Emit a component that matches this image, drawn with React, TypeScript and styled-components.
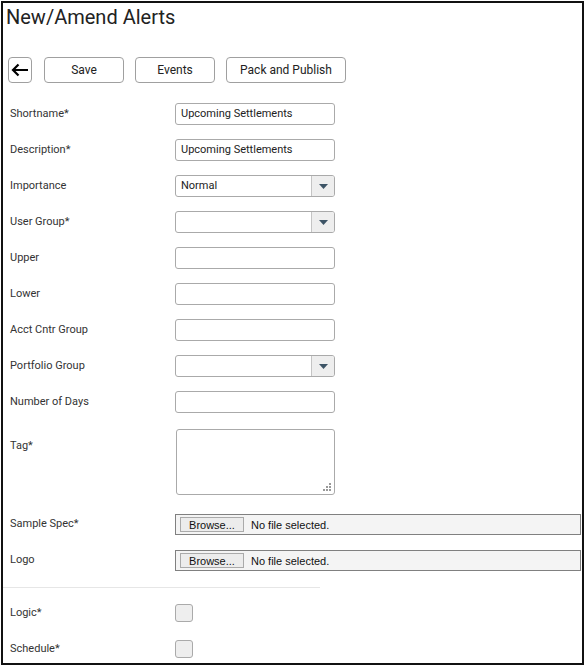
import React from "react";
import styled, {createGlobalStyle} from "styled-components";

const GlobalStyle = createGlobalStyle`
  html, body {
    margin: 0;
    padding: 0;
    background: #fff;
  }
  body {
    font-family: Roboto, "Liberation Sans", Arial, sans-serif;
    color: #333;
  }
`;

const Frame = styled.div`
  box-sizing: border-box;
  margin: 1px 0 0 1px;
  width: 583px;
  height: 664px;
  border: 2px solid #111;
  overflow: hidden;
`;

const Title = styled.h1`
  margin: 0;
  padding: 2px 0 0 3px;
  font-size: 20px;
  line-height: 24px;
  font-weight: 400;
  color: #222;
`;

const Toolbar = styled.div`
  display: flex;
  gap: 11px;
  margin: 28px 0 0 5px;
`;

const Button = styled.button<{ $w: number }>`
  box-sizing: border-box;
  width: ${p => p.$w}px;
  height: 26px;
  padding: 0;
  border: 1px solid #a0a0a0;
  border-radius: 4px;
  background: #fff;
  font-family: Roboto, "Liberation Sans", Arial, sans-serif;
  font-size: 12px;
  color: #222;
  display: flex;
  align-items: center;
  justify-content: center;
`;

const BackButton = styled(Button)`
  margin-right: 1px;
`;

const Form = styled.div`
  margin-top: 20px;
  padding-left: 7px;
`;

const Row = styled.div<{ $gap: number; $top?: boolean }>`
  display: grid;
  grid-template-columns: 165px 1fr;
  align-items: ${p => (p.$top ? "start" : "center")};
  margin-bottom: ${p => p.$gap}px;
`;

const Label = styled.div<{ $pad?: number }>`
  font-size: 11px;
  color: #333;
  padding-top: ${p => p.$pad ?? 0}px;
  margin-top: -2px;
`;

const TextInput = styled.div`
  box-sizing: border-box;
  width: 160px;
  height: 22px;
  border: 1px solid #aaa;
  border-radius: 3px;
  background: #fff;
  padding: 0 5px;
  font-size: 11px;
  line-height: 20px;
  color: #222;
`;

const SelectBox = styled.div`
  box-sizing: border-box;
  width: 160px;
  height: 22px;
  border: 1px solid #aaa;
  border-radius: 3px;
  background: #fff;
  display: flex;
  overflow: hidden;
`;

const SelectValue = styled.div`
  flex: 1;
  padding: 0 5px;
  font-size: 11px;
  line-height: 20px;
  color: #222;
`;

const SelectArrow = styled.div`
  width: 22px;
  background: #eee;
  border-left: 1px solid #c4c4c4;
  display: flex;
  align-items: center;
  justify-content: center;
`;

const AreaWrap = styled.div`
  position: relative;
  box-sizing: border-box;
  width: 159px;
  height: 66px;
  margin-left: 1px;
  border: 1px solid #aaa;
  border-radius: 3px;
  background: #fff;
`;

const Grip = styled.svg`
  position: absolute;
  right: 3px;
  bottom: 3px;
`;

const FileBox = styled.div`
  box-sizing: border-box;
  width: 406px;
  height: 21px;
  border: 1px solid #808080;
  background: #f4f4f4;
  display: flex;
  align-items: center;
  padding-left: 4px;
  gap: 7px;
  font-family: "Liberation Sans", Arial, sans-serif;
  font-size: 11px;
  color: #111;
`;

const BrowseButton = styled.div`
  box-sizing: border-box;
  width: 64px;
  height: 15px;
  border: 1px solid #aaa;
  background: #ececec;
  display: flex;
  align-items: center;
  justify-content: center;
  color: #111;
`;

const Separator = styled.hr`
  width: 317px;
  margin: 0 0 16px -7px;
  border: none;
  border-top: 1px solid #e6e6e6;
  height: 0;
`;

const Checkbox = styled.div`
  box-sizing: border-box;
  width: 18px;
  height: 18px;
  border: 1px solid #aaa;
  border-radius: 3px;
  background: #eee;
`;

function Caret() {
    return (
        <svg width="9" height="5" viewBox="0 0 9 5">
            <path d="M0 0 H9 L4.5 5 Z" fill="#3d5466"/>
        </svg>
    );
}

function Select({value}: { value?: string }) {
    return (
        <SelectBox>
            <SelectValue>{value}</SelectValue>
            <SelectArrow><Caret/></SelectArrow>
        </SelectBox>
    );
}

function FileField() {
    return (
        <FileBox>
            <BrowseButton>Browse...</BrowseButton>
            <span>No file selected.</span>
        </FileBox>
    );
}

export default function App() {
    return (
        <>
            <GlobalStyle/>
            <Frame>
                <Title>New/Amend Alerts</Title>
                <Toolbar>
                    <BackButton $w={24}>
                        <svg width="18" height="14" viewBox="0 0 18 14">
                            <path d="M17 7 H2 M7.5 1.5 L2 7 L7.5 12.5" stroke="#000" strokeWidth="2.2" fill="none"/>
                        </svg>
                    </BackButton>
                    <Button $w={80}>Save</Button>
                    <Button $w={80}>Events</Button>
                    <Button $w={120}>Pack and Publish</Button>
                </Toolbar>
                <Form>
                    <Row $gap={14}>
                        <Label>Shortname*</Label>
                        <TextInput>Upcoming Settlements</TextInput>
                    </Row>
                    <Row $gap={14}>
                        <Label>Description*</Label>
                        <TextInput>Upcoming Settlements</TextInput>
                    </Row>
                    <Row $gap={14}>
                        <Label>Importance</Label>
                        <Select value="Normal"/>
                    </Row>
                    <Row $gap={14}>
                        <Label>User Group*</Label>
                        <Select/>
                    </Row>
                    <Row $gap={14}>
                        <Label>Upper</Label>
                        <TextInput/>
                    </Row>
                    <Row $gap={14}>
                        <Label>Lower</Label>
                        <TextInput/>
                    </Row>
                    <Row $gap={14}>
                        <Label>Acct Cntr Group</Label>
                        <TextInput/>
                    </Row>
                    <Row $gap={14}>
                        <Label>Portfolio Group</Label>
                        <Select/>
                    </Row>
                    <Row $gap={16}>
                        <Label>Number of Days</Label>
                        <TextInput/>
                    </Row>
                    <Row $gap={19} $top>
                        <Label $pad={12}>Tag*</Label>
                        <AreaWrap>
                            <Grip width="8" height="8" viewBox="0 0 8 8">
                                <rect x="6" y="0" width="2" height="2" fill="#999"/>
                                <rect x="3" y="3" width="2" height="2" fill="#999"/>
                                <rect x="6" y="3" width="2" height="2" fill="#999"/>
                                <rect x="0" y="6" width="2" height="2" fill="#999"/>
                                <rect x="3" y="6" width="2" height="2" fill="#999"/>
                                <rect x="6" y="6" width="2" height="2" fill="#999"/>
                            </Grip>
                        </AreaWrap>
                    </Row>
                    <Row $gap={15}>
                        <Label>Sample Spec*</Label>
                        <FileField/>
                    </Row>
                    <Row $gap={16}>
                        <Label>Logo</Label>
                        <FileField/>
                    </Row>
                    <Separator/>
                    <Row $gap={18}>
                        <Label>Logic*</Label>
                        <Checkbox/>
                    </Row>
                    <Row $gap={0}>
                        <Label>Schedule*</Label>
                        <Checkbox/>
                    </Row>
                </Form>
            </Frame>
        </>
    );
}
